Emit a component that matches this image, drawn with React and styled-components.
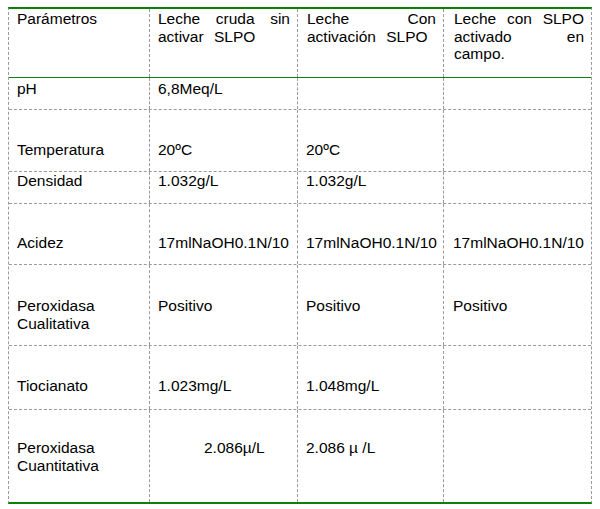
import React from 'react';
import styled, { createGlobalStyle } from 'styled-components';

const GlobalStyle = createGlobalStyle`
  html, body {
    margin: 0;
    padding: 0;
    background: #ffffff;
  }
  body {
    font-family: "Liberation Sans", Arial, sans-serif;
    color: #000000;
  }
`;

const GREEN = '#0b800b';
const DASH = '#9a9a9a';

const Page = styled.div`
  padding: 7px 8px 0 8px;
`;

const Table = styled.div`
  width: 584px;
  box-sizing: border-box;
  border-top: 2px solid ${GREEN};
  border-bottom: 2px solid ${GREEN};
  border-left: 1px dashed ${DASH};
  border-right: 1px dashed ${DASH};
  font-size: 15.5px;
  line-height: 17.5px;
`;

const Row = styled.div`
  display: grid;
  grid-template-columns: 140px 148px 146px 148px;
  height: ${p => p.$height}px;
  box-sizing: content-box;
  border-bottom: ${p =>
    p.$divider === 'green' ? `1px solid ${GREEN}` :
    p.$divider === 'dash' ? `1px dashed ${DASH}` : 'none'};
`;

const Cell = styled.div`
  box-sizing: border-box;
  padding: ${p => p.$top}px 7px 0 ${p => p.$left || 8}px;
  border-left: ${p => (p.$first ? 'none' : `1px dashed ${DASH}`)};
  overflow: hidden;
`;

const Line = styled.div`
  white-space: nowrap;
  text-align: ${p => (p.$justify ? 'justify' : 'left')};
  text-align-last: ${p => (p.$justify ? 'justify' : 'left')};
  word-spacing: ${p => p.$spacing || 0}px;
`;

const rows = [
  { h: 31, pad: 2, div: 'dash', cells: ['pH', '6,8Meq/L', '', ''] },
  { h: 61, pad: 31, div: 'dash', cells: ['Temperatura', '20ºC', '20ºC', ''] },
  { h: 31, pad: 0, div: 'dash', cells: ['Densidad', '1.032g/L', '1.032g/L', ''] },
  { h: 60, pad: 30, div: 'dash', cells: ['Acidez', '17mlNaOH0.1N/10', '17mlNaOH0.1N/10', '17mlNaOH0.1N/10'] },
  { h: 80, pad: 32, div: 'dash', cells: [['Peroxidasa', 'Cualitativa'], 'Positivo', 'Positivo', 'Positivo'] },
  { h: 63, pad: 31, div: 'dash', cells: ['Tiocianato', '1.023mg/L', '1.048mg/L', ''] },
  { h: 92, pad: 29, div: 'none', cells: [['Peroxidasa', 'Cuantitativa'], '2.086µ/L', '2.086 µ /L', ''], indent: { 1: 54 } },
];

function App() {
  return (
    <>
      <GlobalStyle />
      <Page>
        <Table>
          <Row $height={68} $divider="green">
            <Cell $first $top={1}>
              <Line>Parámetros</Line>
            </Cell>
            <Cell $top={1}>
              <Line $justify>Leche cruda sin</Line>
              <Line $spacing={6}>activar SLPO</Line>
            </Cell>
            <Cell $top={1} $left={9}>
              <Line $justify>Leche Con</Line>
              <Line $spacing={6}>activación SLPO</Line>
            </Cell>
            <Cell $top={1} $left={10}>
              <Line $justify>Leche con SLPO</Line>
              <Line $justify>activado en</Line>
              <Line>campo.</Line>
            </Cell>
          </Row>
          {rows.map((r, i) => (
            <Row key={i} $height={r.h} $divider={r.div}>
              {r.cells.map((c, j) => (
                <Cell
                  key={j}
                  $first={j === 0}
                  $top={r.pad}
                  $left={(r.indent && r.indent[j]) || (j === 2 ? 8 : j === 3 ? 9 : 8)}
                >
                  {Array.isArray(c)
                    ? c.map((t, k) => <Line key={k}>{t}</Line>)
                    : c && <Line>{c}</Line>}
                </Cell>
              ))}
            </Row>
          ))}
        </Table>
      </Page>
    </>
  );
}

export default App;
